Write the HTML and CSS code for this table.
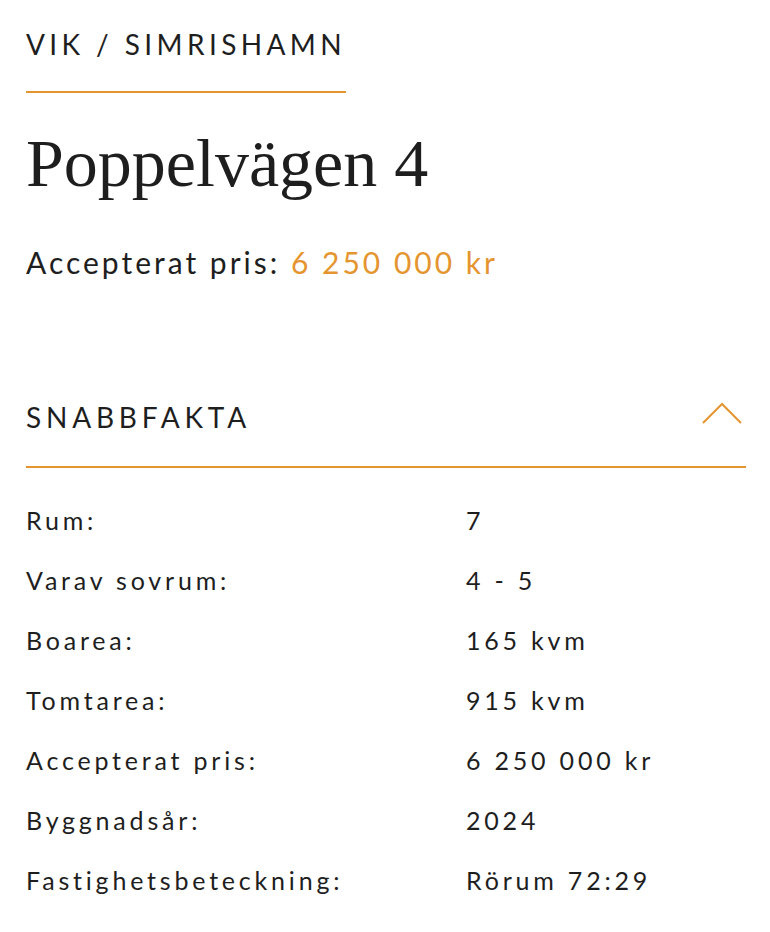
FILE: index.html
```html
<!DOCTYPE html>
<html>
  <head>
    <link rel="stylesheet" href="styles.css">
  </head>
  <body>
    <div class="page">
      <div class="crumb">VIK / SIMRISHAMN</div>
      <h1 class="title">Poppelvägen 4</h1>
      <p class="price">Accepterat pris: <span class="accent">6 250 000 kr</span></p>

      <div class="facts">
        <div class="facts-head">
          <h2>SNABBFAKTA</h2>
          <svg class="chevron" width="40" height="22" viewBox="0 0 40 22">
            <polyline points="1,21 20,2 39,21" fill="none" stroke="#e5952f" stroke-width="2"/>
          </svg>
        </div>
        <div class="facts-list">
          <div class="row"><span class="label">Rum:</span><span class="value">7</span></div>
          <div class="row"><span class="label">Varav sovrum:</span><span class="value">4 - 5</span></div>
          <div class="row"><span class="label">Boarea:</span><span class="value">165 kvm</span></div>
          <div class="row"><span class="label">Tomtarea:</span><span class="value">915 kvm</span></div>
          <div class="row"><span class="label">Accepterat pris:</span><span class="value">6 250 000 kr</span></div>
          <div class="row"><span class="label">Byggnadsår:</span><span class="value">2024</span></div>
          <div class="row"><span class="label">Fastighetsbeteckning:</span><span class="value">Rörum 72:29</span></div>
        </div>
      </div>
    </div>
  </body>
</html>
```

FILE: styles.css
```css
/* objektsida */
body {
  margin: 0;
  font-family: Lato, "Open Sans", sans-serif;
  color: #1e1e1e;
  background-color: #fff;
}
.page {
  padding: 24px 24px 0 26px;
}
.crumb {
  display: inline-block;
  font-size: 28px;
  letter-spacing: 4.4px;
  line-height: 40px;
  padding-bottom: 27px;
  border-bottom: 2px solid #e5952f;
}
.title {
  font-family: "Liberation Serif", serif;
  font-weight: normal;
  font-size: 68px;
  margin: 30px 0 0 0;
  line-height: 80px;
}
.price {
  font-size: 30px;
  letter-spacing: 3px;
  margin: 41px 0 0 0;
}
.accent {
  color: #e5952f;
}
.facts {
  margin-top: 120px;
}
.facts-head {
  display: flex;
  justify-content: space-between;
  align-items: center;
  border-bottom: 2px solid #e5952f;
  padding-bottom: 32px;
}
.facts-head h2 {
  margin: 0;
  font-weight: normal;
  font-size: 28px;
  letter-spacing: 4.8px;
}
.chevron {
  margin-right: 4px;
  margin-bottom: 8px;
}
.facts-list {
  padding-top: 37px;
}
.row {
  display: flex;
  height: 60px;
  font-size: 25px;
  letter-spacing: 3.8px;
}
.label {
  width: 440px;
}
```
